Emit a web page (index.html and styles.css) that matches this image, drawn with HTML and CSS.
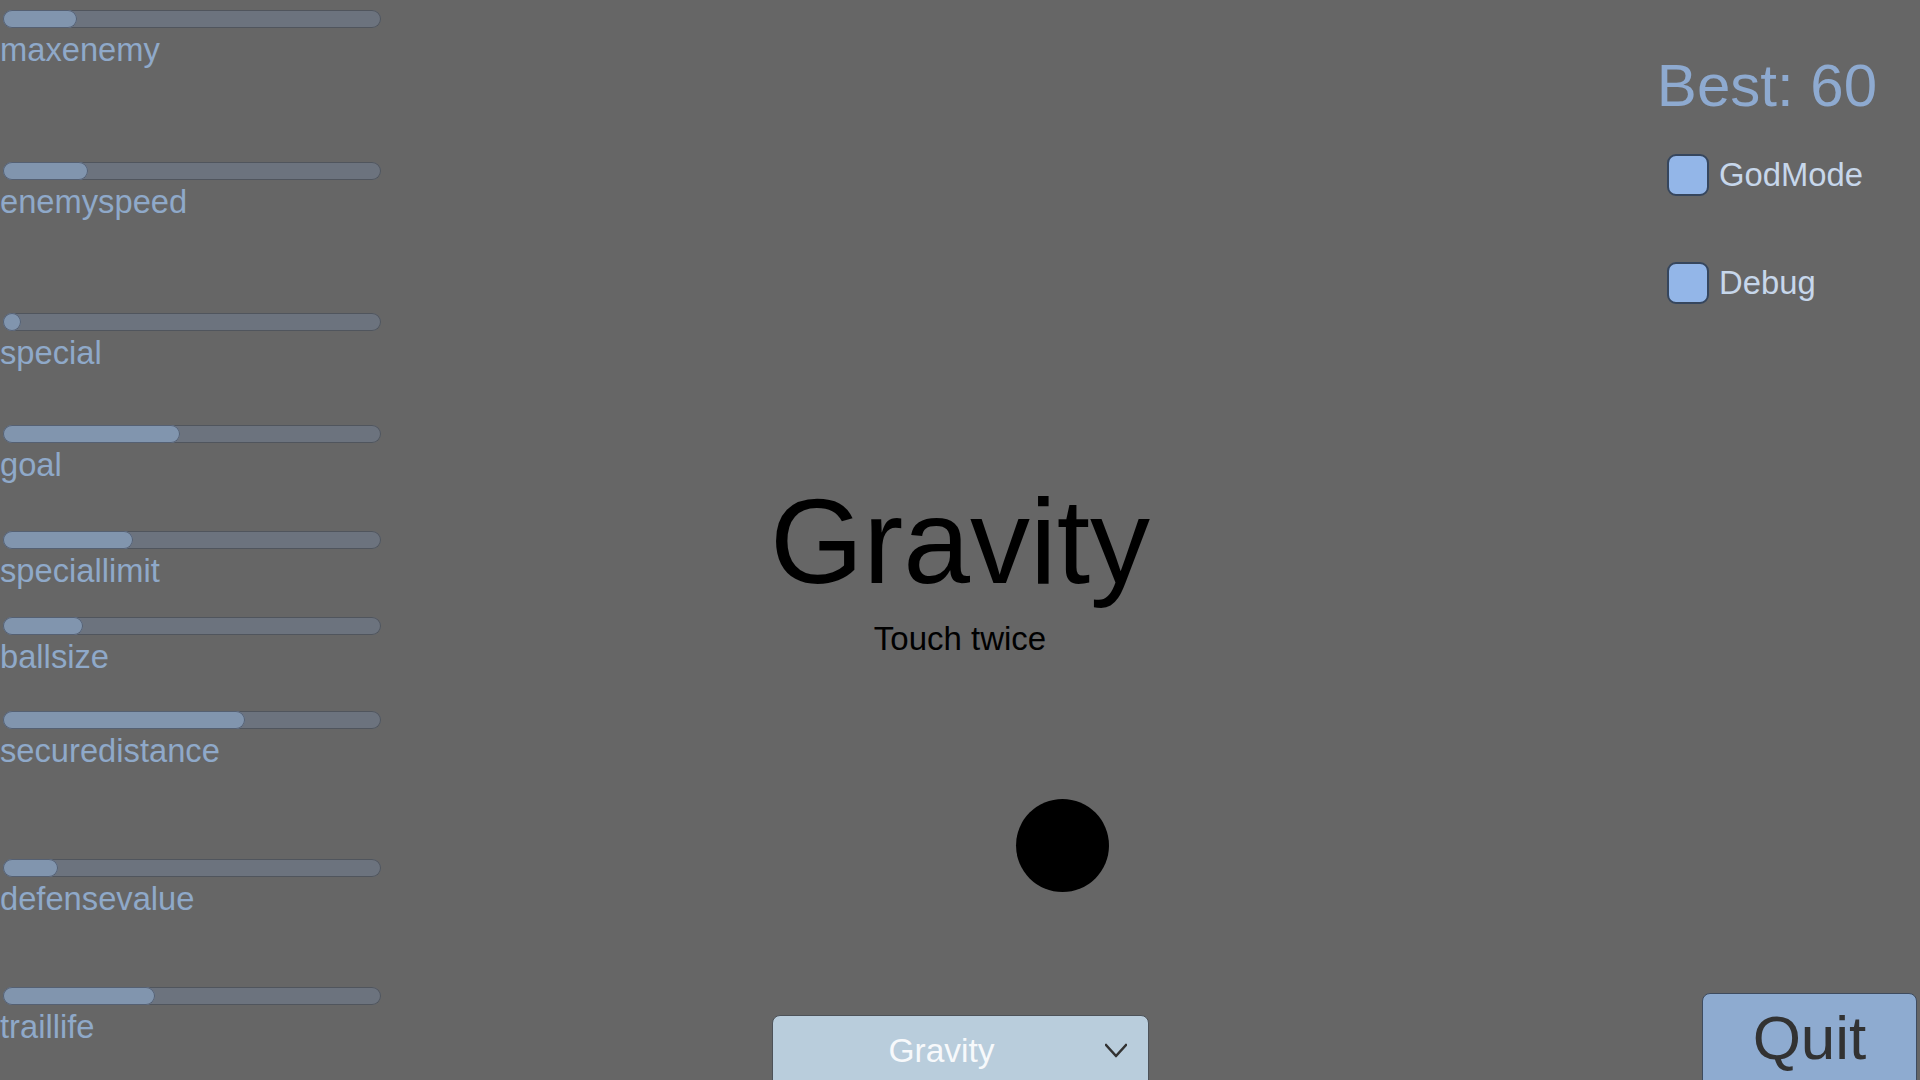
FILE: index.html
```html
<!DOCTYPE html>
<html lang="en">
<head>
<meta charset="utf-8">
<title>Gravity</title>
<link rel="stylesheet" href="styles.css">
</head>
<body>
  <aside class="sliders">
    <div class="slider-row">
      <div class="track"><div class="fill" style="width:74px"></div></div>
      <div class="slider-label">maxenemy</div>
    </div>
    <div class="slider-row">
      <div class="track"><div class="fill" style="width:85px"></div></div>
      <div class="slider-label">enemyspeed</div>
    </div>
    <div class="slider-row">
      <div class="track"><div class="fill" style="width:18px"></div></div>
      <div class="slider-label">special</div>
    </div>
    <div class="slider-row">
      <div class="track"><div class="fill" style="width:177px"></div></div>
      <div class="slider-label">goal</div>
    </div>
    <div class="slider-row">
      <div class="track"><div class="fill" style="width:130px"></div></div>
      <div class="slider-label">speciallimit</div>
    </div>
    <div class="slider-row">
      <div class="track"><div class="fill" style="width:80px"></div></div>
      <div class="slider-label">ballsize</div>
    </div>
    <div class="slider-row">
      <div class="track"><div class="fill" style="width:242px"></div></div>
      <div class="slider-label">securedistance</div>
    </div>
    <div class="slider-row">
      <div class="track"><div class="fill" style="width:55px"></div></div>
      <div class="slider-label">defensevalue</div>
    </div>
    <div class="slider-row">
      <div class="track"><div class="fill" style="width:152px"></div></div>
      <div class="slider-label">traillife</div>
    </div>
  </aside>

  <main class="center">
    <h1 class="title">Gravity</h1>
    <p class="subtitle">Touch twice</p>
    <div class="ball"></div>
    <div class="dropdown">
      <span class="dropdown-label">Gravity</span>
      <svg class="chevron" width="22" height="32" viewBox="0 0 22 32">
        <polyline points="1,10 11,21 21,10" fill="none" stroke="#323232" stroke-width="2.6" stroke-linecap="round" stroke-linejoin="round"/>
      </svg>
    </div>
  </main>

  <aside class="side">
    <div class="best">Best: 60</div>
    <div class="toggles">
      <label class="toggle"><span class="box"></span><span class="toggle-label">GodMode</span></label>
      <label class="toggle"><span class="box"></span><span class="toggle-label">Debug</span></label>
    </div>
    <button class="quit">Quit</button>
  </aside>
</body>
</html>
```
FILE: styles.css
```css
html, body {
  margin: 0;
  padding: 0;
}
body {
  width: 1920px;
  height: 1080px;
  overflow: hidden;
  background: #666666;
  font-family: "Liberation Sans", Arial, sans-serif;
  display: grid;
  grid-template-columns: 1fr 377px 1fr;
}

/* Left sliders */
.sliders {
  padding: 10px 0 0 3px;
  display: flex;
  flex-direction: column;
  align-items: flex-start;
}
.slider-row {
  width: 378px;
  display: flex;
  flex-direction: column;
}
.slider-row:nth-child(1) { margin-bottom: 96px; }
.slider-row:nth-child(2) { margin-bottom: 95px; }
.slider-row:nth-child(3) { margin-bottom: 56px; }
.slider-row:nth-child(4) { margin-bottom: 50px; }
.slider-row:nth-child(5) { margin-bottom: 30px; }
.slider-row:nth-child(6) { margin-bottom: 38px; }
.slider-row:nth-child(7) { margin-bottom: 92px; }
.slider-row:nth-child(8) { margin-bottom: 72px; }

.track {
  height: 18px;
  border-radius: 9px;
  background: #6c737e;
  box-shadow: inset 0 0 0 1px #50555d;
  display: flex;
}
.fill {
  height: 18px;
  border-radius: 9px;
  background: #8195ae;
  box-shadow: inset 0 0 0 1px #556072;
}
.slider-label {
  margin-top: 6px;
  margin-left: -3px;
  font-size: 32.7px;
  line-height: 32px;
  color: #8fa9c9;
  white-space: nowrap;
}

/* Center */
.center {
  padding-top: 481px;
  display: flex;
  flex-direction: column;
  align-items: stretch;
}
.title {
  margin: 0 -20px;
  font-weight: normal;
  font-size: 120px;
  line-height: 120px;
  text-align: center;
  color: #000;
  white-space: nowrap;
}
.subtitle {
  margin: 21px 0 0;
  font-size: 33px;
  line-height: 33px;
  text-align: center;
  color: #000;
}
.ball {
  width: 93px;
  height: 93px;
  border-radius: 50%;
  background: #000;
  margin: 144px 0 0 244.5px;
}
.dropdown {
  margin-top: auto;
  margin-bottom: -20px;
  height: 85px;
  box-sizing: border-box;
  border: 1px solid #4d5258;
  border-radius: 8px;
  background: #b9cddc;
  padding: 18px 21px 0 6px;
  display: flex;
  align-items: flex-start;
}
.dropdown-label {
  flex: 1;
  text-align: center;
  font-size: 33.5px;
  line-height: 33px;
  color: #f7f9fb;
}
.chevron {
  display: block;
  margin-top: 1px;
}

/* Right side */
.side {
  display: flex;
  flex-direction: column;
  align-items: flex-end;
}
.best {
  margin-top: 56px;
  margin-right: 43px;
  font-size: 60px;
  line-height: 60px;
  color: #8eaad0;
  white-space: nowrap;
}
.toggles {
  width: 253px;
  margin-top: 38px;
  display: flex;
  flex-direction: column;
  gap: 66px;
}
.toggle {
  display: flex;
  align-items: center;
  gap: 10px;
}
.box {
  width: 42px;
  height: 42px;
  box-sizing: border-box;
  border: 2px solid #36465d;
  border-radius: 9px;
  background: #93b6e8;
}
.toggle-label {
  font-size: 32.8px;
  line-height: 32px;
  color: #c7d7eb;
}
.quit {
  margin-top: auto;
  margin-right: 3px;
  margin-bottom: -20px;
  width: 215px;
  height: 107px;
  box-sizing: border-box;
  border: 1px solid #3e4b5e;
  border-radius: 8px;
  background: #8eabd0;
  padding: 13px 0 0;
  display: flex;
  justify-content: center;
  align-items: flex-start;
  font-family: "Liberation Sans", Arial, sans-serif;
  font-size: 62px;
  line-height: 62px;
  color: #323232;
}
```
